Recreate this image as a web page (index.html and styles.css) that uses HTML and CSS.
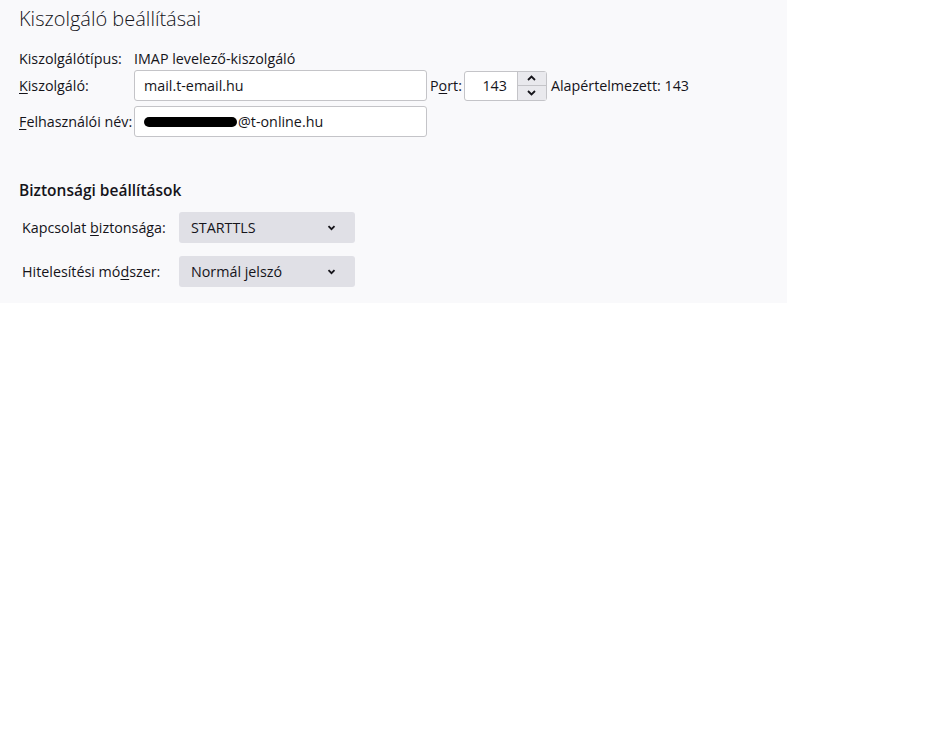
FILE: index.html
```html
<!DOCTYPE html>
<html lang="hu">
<head>
    <meta charset="UTF-8">
    <title>Kiszolgáló beállításai</title>
    <link rel="stylesheet" href="styles.css">
</head>
<body>
    <div class="panel">
        <h1>Kiszolgáló beállításai</h1>

        <div class="row info">
            <span class="label">Kiszolgálótípus:</span>
            <span>IMAP levelező-kiszolgáló</span>
        </div>

        <div class="row">
            <label class="label" for="server"><u>K</u>iszolgáló:</label>
            <div class="input wide" id="server">mail.t-email.hu</div>
            <label class="port-label" for="port">P<u>o</u>rt:</label>
            <div class="number" id="port">
                <span class="num-value">143</span>
                <div class="spin">
                    <span class="spin-btn">
                        <svg width="9" height="6" viewBox="0 0 9 6"><path d="M1 5 L4.5 1.5 L8 5" fill="none" stroke="#15141a" stroke-width="1.8"/></svg>
                    </span>
                    <span class="spin-btn">
                        <svg width="9" height="6" viewBox="0 0 9 6"><path d="M1 1 L4.5 4.5 L8 1" fill="none" stroke="#15141a" stroke-width="1.8"/></svg>
                    </span>
                </div>
            </div>
            <span class="default">Alapértelmezett: 143</span>
        </div>

        <div class="row">
            <label class="label" for="user"><u>F</u>elhasználói név:</label>
            <div class="input wide" id="user"><span class="redact"></span>@t-online.hu</div>
        </div>

        <h2>Biztonsági beállítások</h2>

        <div class="row sec">
            <label class="sec-label"><span>Kapcsolat <u>b</u>iztonsága:</span></label>
            <div class="select">
                <span>STARTTLS</span>
                <svg width="9" height="6" viewBox="0 0 9 6"><path d="M1.5 1.2 L4.5 4.2 L7.5 1.2" fill="none" stroke="#15141a" stroke-width="1.8"/></svg>
            </div>
        </div>

        <div class="row sec">
            <label class="sec-label"><span>Hitelesítési mó<u>d</u>szer:</span></label>
            <div class="select">
                <span>Normál jelszó</span>
                <svg width="9" height="6" viewBox="0 0 9 6"><path d="M1.5 1.2 L4.5 4.2 L7.5 1.2" fill="none" stroke="#15141a" stroke-width="1.8"/></svg>
            </div>
        </div>
    </div>
</body>
</html>
```

FILE: styles.css
```css
body {
    margin: 0;
    background-color: #ffffff;
    font-family: "Open Sans", "Noto Sans", sans-serif;
    font-size: 14.3px;
    color: #15141a;
}
.panel {
    width: 787px;
    height: 303px;
    box-sizing: border-box;
    background-color: #f9f9fb;
    padding: 4px 0 0 19px;
}
h1 {
    font-size: 20px;
    font-weight: 300;
    margin: 0 0 15px 0;
    line-height: 30px;
}
h2 {
    font-size: 15.5px;
    font-weight: 600;
    margin: 42px 0 11px 0;
    line-height: 22px;
}
u {
    text-underline-offset: 2px;
}
.row {
    display: flex;
    align-items: center;
    margin-bottom: 5px;
}
.row.info {
    height: 18px;
    margin-bottom: 3px;
}
.label {
    width: 115px;
    flex-shrink: 0;
}
.input {
    height: 31px;
    box-sizing: border-box;
    background-color: #ffffff;
    border: 1px solid #c4c4c8;
    border-radius: 3px;
    padding: 0 9px;
    display: flex;
    align-items: center;
}
.wide {
    width: 293px;
}
.port-label {
    margin: 0 2px 0 3px;
}
.number {
    width: 83px;
    height: 30px;
    box-sizing: border-box;
    background-color: #ffffff;
    border: 1px solid #c4c4c8;
    border-radius: 3px;
    display: flex;
}
.num-value {
    flex: 1;
    text-align: right;
    padding-right: 10px;
    line-height: 28px;
}
.spin {
    width: 28px;
    display: flex;
    flex-direction: column;
    border-left: 1px solid #c4c4c8;
}
.spin-btn {
    flex: 1;
    background-color: #e9e9ed;
    display: flex;
    align-items: center;
    justify-content: center;
}
.spin-btn + .spin-btn {
    border-top: 1px solid #c4c4c8;
}
.default {
    margin-left: 4px;
}
.redact {
    display: inline-block;
    width: 93px;
    height: 10px;
    background-color: #000000;
    border-radius: 6px;
    margin-right: 1px;
}
.sec {
    margin-bottom: 13px;
}
.sec-label {
    width: 157px;
    padding-left: 3px;
}
.select {
    width: 176px;
    height: 31px;
    box-sizing: border-box;
    background-color: #e0e0e6;
    border-radius: 3px;
    padding: 0 19px 0 12px;
    display: flex;
    align-items: center;
    justify-content: space-between;
}
```
